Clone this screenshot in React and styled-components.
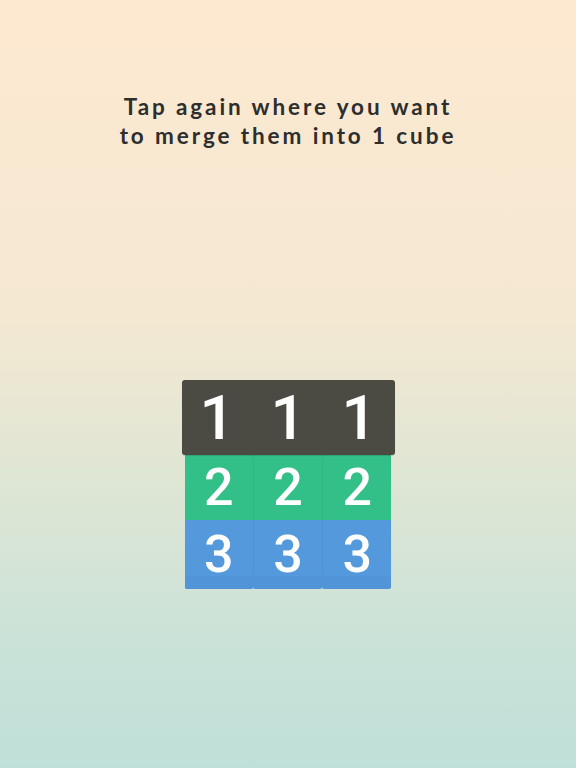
import React from "react";
import styled, { createGlobalStyle } from "styled-components";

const GlobalStyle = createGlobalStyle`
    html, body {
        margin: 0;
        padding: 0;
    }
    body {
        font-family: "Lato", "DejaVu Sans", sans-serif;
    }
`;

const Screen = styled.div`
    width: 576px;
    height: 768px;
    overflow: hidden;
    display: flex;
    flex-direction: column;
    align-items: center;
    background: linear-gradient(180deg, #fde9d0 0%, #f5e8d2 40%, #dfe6d4 62%, #c9e2d8 85%, #bfe0d8 100%);
`;

const Hint = styled.h1`
    margin: 92px 0 0;
    font-family: "Lato", sans-serif;
    font-weight: 700;
    font-size: 22.5px;
    line-height: 29px;
    letter-spacing: 2.9px;
    color: #2d2e2e;
    text-align: center;
`;

const Board = styled.div`
    margin-top: 230px;
    display: flex;
    flex-direction: column;
    align-items: center;
`;

const TopBar = styled.div`
    width: 213px;
    height: 75px;
    border-radius: 3px;
    background: #4b4a43;
    display: grid;
    grid-template-columns: repeat(3, 1fr);
    box-shadow: 0 1px 1px rgba(0, 0, 0, 0.15);
    position: relative;
    z-index: 1;
`;

const Row = styled.div`
    display: flex;
    width: 207px;
`;

const Digit = styled.div`
    display: flex;
    align-items: center;
    justify-content: center;
    color: #ffffff;
    font-family: "Roboto", sans-serif;
    font-weight: 500;
    font-size: ${({ size }) => size}px;
    padding-top: ${({ nudge }) => nudge || 0}px;
`;

const Cell = styled(Digit)`
    flex: 1;
    height: ${({ h }) => h}px;
    background: ${({ color }) => color};
    border-left: 1px solid rgba(0, 0, 0, 0.04);
    border-radius: ${({ last }) => (last ? "0 0 2px 2px" : "0")};
    box-shadow: ${({ last, shade }) => (last ? `inset 0 -13px 0 ${shade}` : "none")};
    &:first-child {
        border-left: none;
    }
`;

const rows = [
    { n: 2, color: "#33c088", h: 65 },
    { n: 3, color: "#5499dc", h: 69, last: true, shade: "#5195d8" },
];

export default function App() {
    return (
        <>
            <GlobalStyle />
            <Screen>
                <Hint>
                    Tap again where you want
                    <br />
                    to merge them into 1 cube
                </Hint>
                <Board>
                    <TopBar>
                        {[0, 1, 2].map((i) => (
                            <Digit key={i} size={62}>1</Digit>
                        ))}
                    </TopBar>
                    {rows.map((row) => (
                        <Row key={row.n}>
                            {[0, 1, 2].map((i) => (
                                <Cell key={i} size={52} color={row.color} h={row.h} last={row.last} shade={row.shade}>
                                    {row.n}
                                </Cell>
                            ))}
                        </Row>
                    ))}
                </Board>
            </Screen>
        </>
    );
}
